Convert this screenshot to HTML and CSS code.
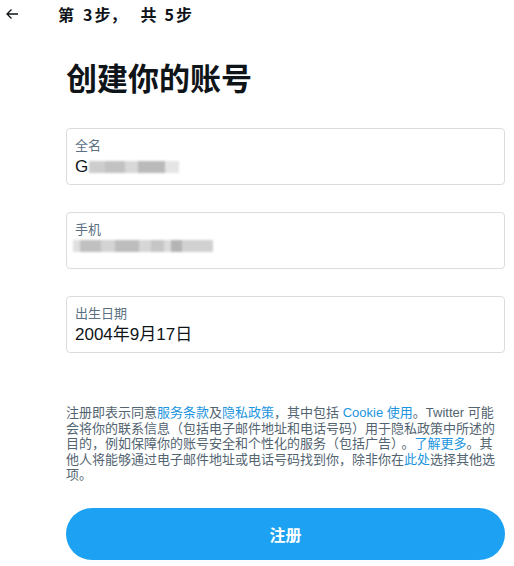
FILE: index.html
```html
<!DOCTYPE html>
<html lang="zh-CN">
<head>
<meta charset="utf-8">
<link rel="stylesheet" href="styles.css">
</head>
<body>
<div class="page">
  <header class="topbar">
    <svg class="back" width="14" height="12" viewBox="0 0 14 12" aria-hidden="true">
      <path d="M13 6H2M6.5 1.5L2 6l4.5 4.5" fill="none" stroke="#0f1419" stroke-width="1.3"/>
    </svg>
    <div class="step"><span>第</span><span class="n1">3</span><span class="n2">步，</span><span class="n3">共</span><span class="n4">5</span><span class="n5">步</span></div>
  </header>
  <main class="main">
    <h1 class="title">创建你的账号</h1>
    <div class="fields">
      <div class="field">
        <div class="label">全名</div>
        <div class="value">G<span class="blur blur-name"></span></div>
      </div>
      <div class="field">
        <div class="label">手机</div>
        <div class="value"><span class="blur blur-phone"></span></div>
      </div>
      <div class="field">
        <div class="label">出生日期</div>
        <div class="value">2004年9月17日</div>
      </div>
    </div>
    <p class="terms">注册即表示同意<a>服务条款</a>及<a>隐私政策</a>，其中包括 <a>Cookie 使用</a>。Twitter 可能会将你的联系信息（包括电子邮件地址和电话号码）用于隐私政策中所述的目的，例如保障你的账号安全和个性化的服务（包括广告）<span class="gap">。</span><a>了解更多</a>。其他人将能够通过电子邮件地址或电话号码找到你，除非你在<a>此处</a>选择其他选项。</p>
    <button class="signup">注册</button>
  </main>
</div>
</body>
</html>
```

FILE: styles.css
```css
* { box-sizing: border-box; }
html, body { margin: 0; padding: 0; background: #fff; }
body {
  font-family: "Liberation Sans", "Noto Sans CJK SC", sans-serif;
  color: #0f1419;
}
.page { width: 514px; height: 566px; overflow: hidden; }
.topbar {
  display: flex;
  align-items: center;
  height: 28px;
  padding-left: 5px;
}
.back { display: block; }
.step {
  margin-left: 39px;
  font-size: 16px;
  font-weight: 700;
  display: flex;
  font-family: "Noto Sans CJK SC", sans-serif;
  line-height: 20px;
}
.step .n1 { margin-left: 9px; }
.step .n2 { margin-left: 2px; }
.step .n3 { margin-left: 14px; }
.step .n4 { margin-left: 8px; }
.step .n5 { margin-left: 2px; }
.main { padding: 0 9px 0 66px; }
.title {
  margin: 29px 0 0;
  font-size: 31px;
  line-height: 40px;
  font-weight: 700;
  font-family: "Noto Sans CJK SC", sans-serif;
}
.fields {
  margin-top: 31px;
  display: flex;
  flex-direction: column;
  gap: 27px;
}
.field {
  height: 57px;
  border: 1px solid #dadcde;
  border-radius: 4px;
  padding: 9px 8px 6px;
}
.label {
  font-size: 13px;
  line-height: 16px;
  color: #5b7083;
}
.value {
  margin-top: 2px;
  font-size: 17px;
  line-height: 22px;
  color: #0f1419;
  display: flex;
  align-items: center;
}
.blur { display: inline-block; height: 12px; filter: blur(0.8px); }
.blur-name {
  width: 90px;
  margin-left: 1px;
  background: linear-gradient(90deg, #cdcdcd 0 18%, #c2c2c2 18% 40%, #d8d8d8 40% 55%, #bababa 55% 85%, #e5e5e5 85% 100%);
}
.blur-phone {
  width: 140px;
  margin-left: -2px;
  background: linear-gradient(90deg, #e0e0e0 0 5%, #c0c0c0 5% 20%, #d4d4d4 20% 30%, #bdbdbd 30% 47%, #d6d6d6 47% 56%, #c6c6c6 56% 65%, #dbdbdb 65% 70%, #b4b4b4 70% 78%, #d1d1d1 78% 100%);
}
.terms {
  margin: 52px 0 0;
  font-size: 13px;
  line-height: 15.6px;
  color: #536471;
}
.terms .gap { margin-left: 4px; }
.terms a { color: #1b95e0; }
.signup {
  display: block;
  width: 100%;
  margin-top: 25px;
  height: 52px;
  border: 0;
  border-radius: 26px;
  background: #1da1f2;
  color: #fff;
  font-size: 16px;
  font-weight: 700;
  font-family: "Noto Sans CJK SC", sans-serif;
}
```
